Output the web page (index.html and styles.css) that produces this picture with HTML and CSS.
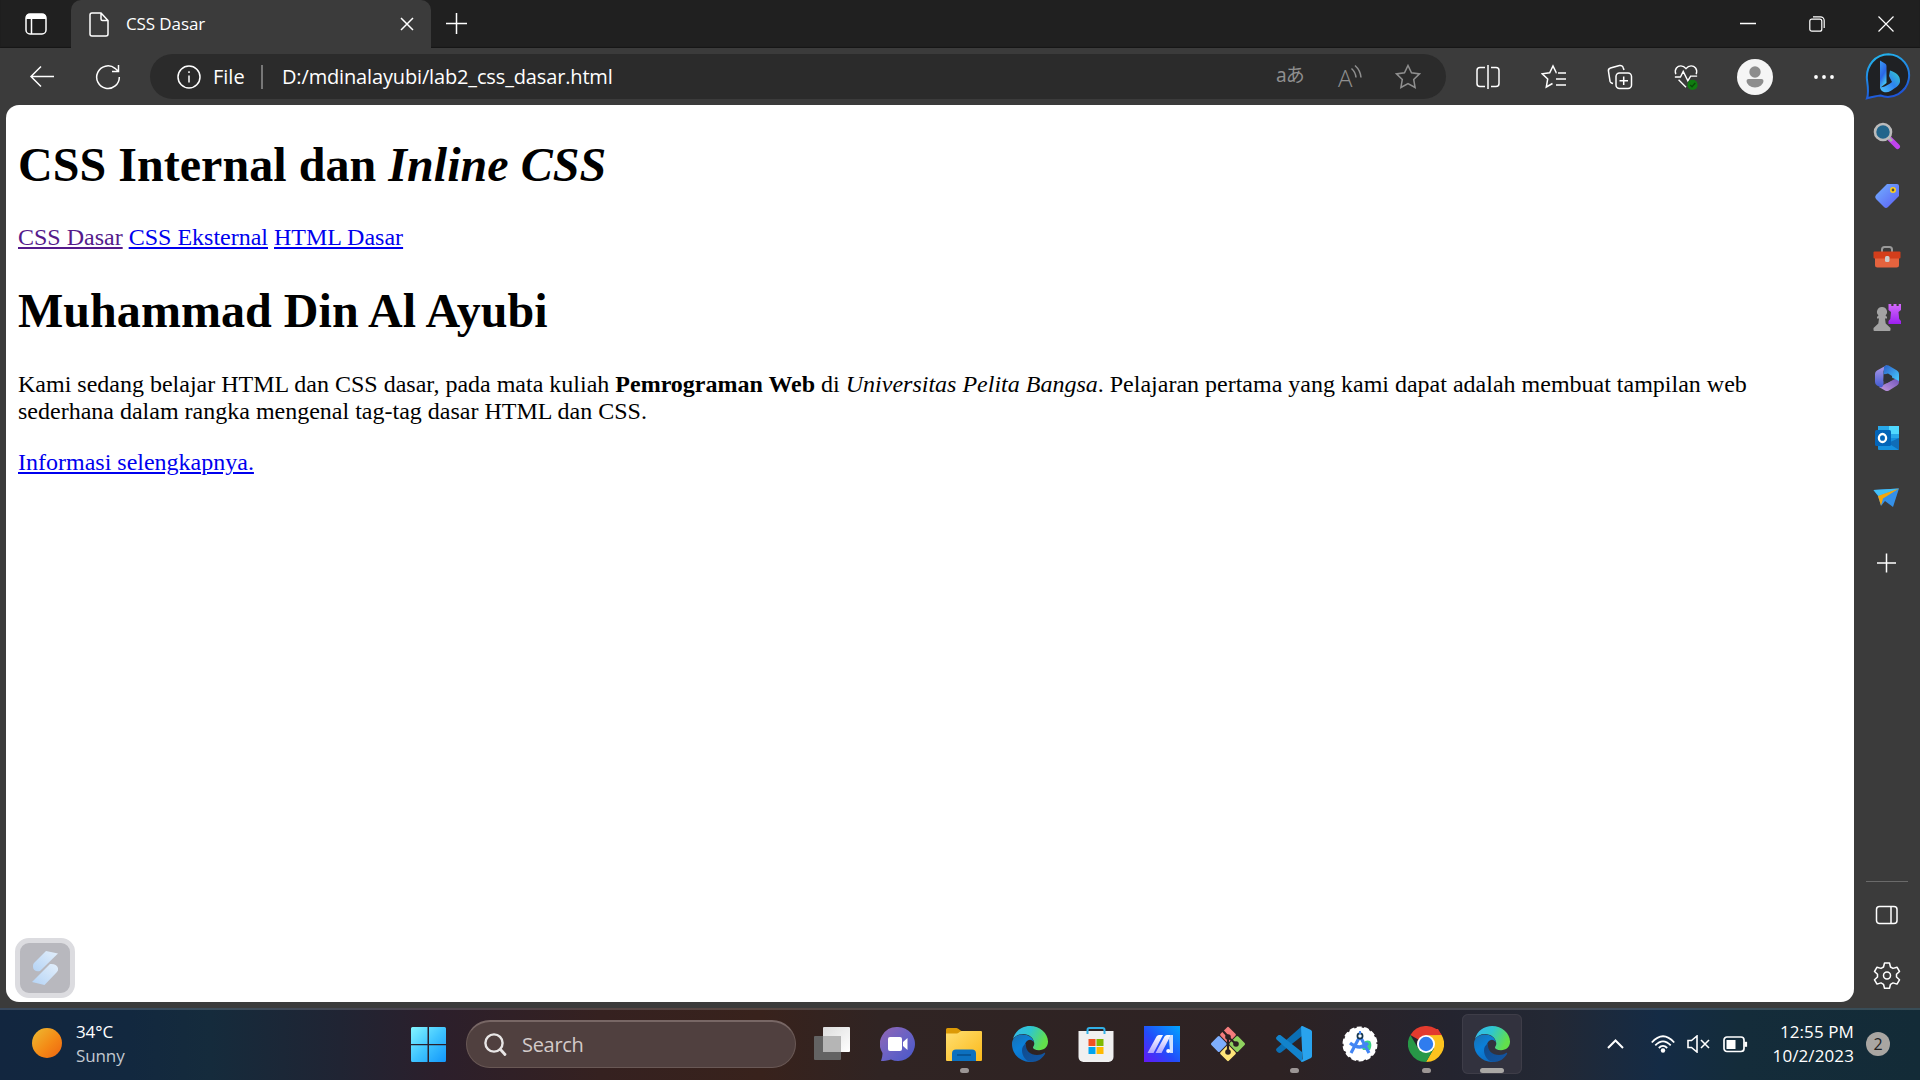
FILE: index.html
```html
<!DOCTYPE html>
<html lang="id">
<head>
<meta charset="utf-8">
<title>CSS Dasar</title>
<link rel="stylesheet" href="styles.css">
</head>
<body>
<svg class="defs" width="0" height="0" aria-hidden="true">
  <defs>
    <linearGradient id="eA" x1="0" y1="0" x2="1" y2="0.35"><stop offset="0" stop-color="#35b8f0"/><stop offset=".5" stop-color="#2fc6cf"/><stop offset="1" stop-color="#62e04b"/></linearGradient>
    <linearGradient id="eB" x1="0" y1="0" x2=".6" y2="1"><stop offset="0" stop-color="#1a6fae"/><stop offset=".5" stop-color="#0b80d8"/><stop offset="1" stop-color="#0c6cc4"/></linearGradient>
    <linearGradient id="eC" x1="0" y1="0" x2="1" y2="1"><stop offset="0" stop-color="#0f4a8c"/><stop offset="1" stop-color="#1357a4"/></linearGradient>
    <symbol id="edge" viewBox="0 0 36 36">
      <path fill="url(#eA)" d="M1 13C3 5 10 0 18 0c10 0 18 7.500 18 15.500 0 5.500-4 8.700-9 8.700-4 0-6-1.500-6-2.700 0-1 1.300-1.800 1.300-4C22 12 17 8 11 8 6.500 8 3 10 1 13z"/>
      <path fill="url(#eB)" d="M0 18C0 12 5 8.500 10.500 8.500c6 0 10.500 3 11.500 8-1-2-2.500-2.800-4-2.800-3.500 0-5.500 4-5.500 8C12.500 28 17 34 22 35.500 10 38 0 29 0 18z"/>
      <path fill="url(#eC)" d="M14 17.500c-1 7 4.500 11.500 11 11.500 3 0 5.500-1 7-2 .8-.4 1.500.2 1 1C30 33 25 36 20 36c-6 0-10-6-10-11.500 0-3 1.500-5.700 4-7z"/>
    </symbol>
  </defs>
</svg>

<div class="browser">
  <header class="tabstrip">
    <button class="tab-actions"><svg width="22" height="22" viewBox="0 0 22 22"><rect x="1" y="1" width="20" height="20" rx="4" class="line"/><path d="M1 6V4a3 3 0 0 1 3-3h14a3 3 0 0 1 3 3v2z" fill="#fff"/><path d="M6.500 6v15" class="line"/></svg></button>
    <div class="tab">
      <svg width="20" height="25" viewBox="0 0 20 25" class="line"><path d="M3 1h9l7 7.500V22a2 2 0 0 1-2 2H3a2 2 0 0 1-2-2V3a2 2 0 0 1 2-2zM12 1v6a1.500 1.500 0 0 0 1.500 1.500H19"/></svg>
      <span class="tab-title">CSS Dasar</span>
      <svg width="14" height="14" viewBox="0 0 14 14" class="line"><path d="M1 1l12 12M13 1L1 13"/></svg>
    </div>
    <svg class="new-tab line" width="22" height="22" viewBox="0 0 22 22"><path d="M10.500 0v21M0 10.500h21"/></svg>
    <div class="window-buttons">
      <svg width="16" height="16" viewBox="0 0 16 16" class="line"><path d="M0 7.500h16"/></svg>
      <svg width="16" height="16" viewBox="0 0 16 16" class="line thin"><rect x=".8" y="3.200" width="12" height="12" rx="2"/><path d="M4 .8h7.500a3.700 3.700 0 0 1 3.700 3.700V12"/></svg>
      <svg width="16" height="16" viewBox="0 0 16 16" class="line thin"><path d="M.5.5l15 15M15.500.5l-15 15"/></svg>
    </div>
  </header>

  <nav class="toolbar">
    <svg class="back line" width="26" height="24" viewBox="0 0 26 24"><path d="M25 11.500H2M12 1.500l-10 10 10 10"/></svg>
    <svg class="reload line" width="26" height="26" viewBox="0 0 26 26"><path d="M24.300 13A11.300 11.300 0 1 1 20 4.300L23 7M23.500 1v6.500H17"/></svg>
    <div class="address">
      <svg width="24" height="24" viewBox="0 0 24 24" class="line"><circle cx="12" cy="12" r="11"/><path d="M12 10.500v7M12 6.200v1.800"/></svg>
      <span class="scheme">File</span>
      <i class="bar"></i>
      <span class="url">D:/mdinalayubi/lab2_css_dasar.html</span>
      <div class="address-actions">
        <span class="translate">aあ</span>
        <svg class="read" width="24" height="24" viewBox="0 0 24 24"><text x="0" y="21.500" class="read-a">A</text><path class="line dim" d="M13.500 3.500q4 3.500 4.500 9M17 .5q5.500 5 6 12"/></svg>
        <svg width="26" height="26" viewBox="0 0 26 26" class="line dim"><path d="M13 1.500l3.500 7.300 8 1.100-5.800 5.600 1.400 8L13 19.700l-7.100 3.800 1.400-8L1.500 9.900l8-1.100z"/></svg>
      </div>
    </div>
    <div class="tools">
      <svg viewBox="0 0 26 26" class="line"><path d="M10 22.500H5a3 3 0 0 1-3-3v-13a3 3 0 0 1 3-3h5M16 3.500h5a3 3 0 0 1 3 3v13a3 3 0 0 1-3 3h-5M13 1v24"/></svg>
      <svg viewBox="0 0 26 26" class="line"><path d="M15.500 8.800h-.2L12 2 8.700 8.800l-7.500 1L6.700 15l-1.400 8 6.200-3.500M17 9h8M15 15h10M15 21h10"/></svg>
      <svg viewBox="0 0 26 26" class="line"><rect x="9" y="9" width="15.500" height="15.500" rx="3.500"/><path d="M16.700 12.500v8.500M12.500 16.700H21M6 19.500l-1-.3a3 3 0 0 1-2-2L1.500 7.500a3 3 0 0 1 2-3.500l9-2.500a3 3 0 0 1 3.700 2.200L17 6"/></svg>
      <svg viewBox="0 0 26 28" class="line"><path d="M2 11C0 5 4 2 7.500 2c2.500 0 4 1 5.500 3 1.500-2 3-3 5.500-3C22 2 26 5 24 11M1 14h6l3-6 5 10 3-5h7M5 17l8 8"/><circle cx="20" cy="22.500" r="5.500" fill="#107c10" stroke="none"/><path d="M17.500 22.500l2 2 3.500-4" stroke="#0a4a0a"/></svg>
    </div>
    <svg class="avatar" width="36" height="36" viewBox="0 0 36 36"><circle cx="18" cy="18" r="18" fill="#f5f5f5"/><circle cx="18" cy="13" r="5.700" fill="#8d8d8d"/><path d="M9.500 22a2 2 0 0 1 2-2h13a2 2 0 0 1 2 2 8.500 6.500 0 0 1-17 0z" fill="#8d8d8d"/></svg>
    <svg class="more" width="22" height="6" viewBox="0 0 22 6" fill="#fff"><circle cx="3" cy="3" r="1.900"/><circle cx="11" cy="3" r="1.900"/><circle cx="19" cy="3" r="1.900"/></svg>
    <svg class="bing" width="46" height="47" viewBox="0 0 46 47">
      <defs><linearGradient id="bo" x1="0" y1="0" x2="0.300" y2="1"><stop offset="0" stop-color="#23bdf0"/><stop offset="1" stop-color="#1e55d8"/></linearGradient><linearGradient id="bi" x1="0" y1="0" x2=".4" y2="1"><stop offset="0" stop-color="#3b9bf5"/><stop offset=".6" stop-color="#2a66e6"/><stop offset="1" stop-color="#48c7f4"/></linearGradient><linearGradient id="bj" x1="1" y1="0" x2="0" y2="1"><stop offset="0" stop-color="#37d0c8"/><stop offset=".5" stop-color="#2d83f0"/><stop offset="1" stop-color="#52c8fa"/></linearGradient></defs>
      <path d="M23.500 1.200a21.300 21.300 0 1 1-8 41.300C11 43 7 44 2 45.300 4 40 2.800 33 2 27 .5 12 11 1.200 23.500 1.200z" fill="#1f2124" stroke="url(#bo)" stroke-width="2"/>
      <path d="M15 7.500l5 3a3 3 0 0 1 1.500 2.500v17L15 35z" fill="url(#bi)"/><path d="M25 17.500c6 2 10.500 5 10 11-.3 4-5 6.500-9.500 9.500-4 2.500-10 1.500-10.500-4 3 1 8-2 12-5l-3-6z" fill="url(#bj)"/>
    </svg>
  </nav>

  <div class="workspace">
    <main class="page">
      <h1>CSS Internal dan <i>Inline CSS</i></h1>
      <nav><a class="visited" href="#dasar">CSS Dasar</a> <a href="#eksternal">CSS Eksternal</a> <a href="#html">HTML Dasar</a></nav>
      <h1 class="name">Muhammad Din Al Ayubi</h1>
      <p>Kami sedang belajar HTML dan CSS dasar, pada mata kuliah <b>Pemrograman Web</b> di <i>Universitas Pelita Bangsa</i>. Pelajaran pertama yang kami dapat adalah membuat tampilan web sederhana dalam rangka mengenal tag-tag dasar HTML dan CSS.</p>
      <a href="#info">Informasi selengkapnya.</a>
      <div class="widget"><svg width="26" height="35" viewBox="0 0 26 35"><defs><linearGradient id="wg" x1="1" y1="0" x2="0" y2="1"><stop offset="0" stop-color="#e3effb"/><stop offset="1" stop-color="#b4d3f5"/></linearGradient></defs><path fill="url(#wg)" d="M14 0l12 2.500L8 20c-4 1-7-1-7-4 0-2 0-3 1.500-4.500z"/><path fill="url(#wg)" d="M18 13c4-.5 7 1 8 4 .4 2 0 3-1.500 4.500L12.500 34 0 31z"/></svg></div>
    </main>

    <aside class="sidebar">
      <svg viewBox="0 0 28 28"><path d="M17 17l7.500 7.500" stroke="#c044ee" stroke-width="5" stroke-linecap="round"/><path d="M15 15l4 4" stroke="#aaa" stroke-width="3"/><circle cx="10" cy="10" r="8" fill="#22658b" stroke="#bbb" stroke-width="2.600"/></svg>
      <svg viewBox="0 0 28 28"><defs><linearGradient id="tg" x1="0" y1="0" x2="1" y2="1"><stop stop-color="#72b2ff"/><stop offset="1" stop-color="#5b5df4"/></linearGradient></defs><path d="M14 2h10a2 2 0 0 1 2 2v10L15 25a3 3 0 0 1-4 0l-8-8a3 3 0 0 1 0-4z" fill="url(#tg)"/><circle cx="20" cy="8" r="2.200" fill="#554c36" stroke="#ffd01c" stroke-width="1.600"/></svg>
      <svg viewBox="0 0 28 28"><path d="M9 9V6.500A2.500 2.500 0 0 1 11.500 4h5A2.500 2.500 0 0 1 19 6.500V9" fill="none" stroke="#999" stroke-width="2"/><path d="M2 14h24v8a2.500 2.500 0 0 1-2.500 2.500h-19A2.500 2.500 0 0 1 2 22z" fill="#e5633e"/><rect x=".5" y="8.500" width="27" height="7" rx="1" fill="#d43e1b"/><rect x="12" y="13" width="4.500" height="6" rx="1.500" fill="#ccc"/></svg>
      <svg viewBox="0 0 28 28"><defs><linearGradient id="rk" x1="0" y1="0" x2="0" y2="1"><stop stop-color="#d36afb"/><stop offset="1" stop-color="#9c1ff0"/></linearGradient></defs><path d="M15.500 1h2.800v2h2.200V1h3v2h2.200V1H28v6l-2.500 2 .7 7 1.800 2v3H15.500v-3l1.800-2 .7-7-2.500-2z" fill="url(#rk)"/><path d="M9 4a4.800 4.800 0 0 1 3.500 8.300L14 14v1.500h-2l.7 5 4.800 4.500v2a1 1 0 0 1-1 1h-15a1 1 0 0 1-1-1v-2l4.800-4.500.7-5H4V14l1.500-1.700A4.800 4.800 0 0 1 9 4z" fill="#a3a3a3"/></svg>
      <svg viewBox="0 0 28 28"><defs><linearGradient id="m3" x1="0" y1="0" x2="1" y2="1"><stop stop-color="#2a5fc8"/><stop offset="1" stop-color="#48ccff"/></linearGradient><linearGradient id="m4" x1="0" y1="0" x2="0" y2="1"><stop stop-color="#b49be8"/><stop offset="1" stop-color="#3f5ad0"/></linearGradient><linearGradient id="m5" x1="1" y1="0" x2="0" y2="1"><stop stop-color="#6a4fb8"/><stop offset="1" stop-color="#c79ce0"/></linearGradient></defs><path d="M26 13v5a4 4 0 0 1-2 3.500l-8 5a4 4 0 0 1-4 0L6 23l12-6z" fill="url(#m5)"/><path d="M14 1L4 6.500A4 4 0 0 0 2 10v8a4 4 0 0 0 2 3.500l4 2c2-1 2.500-2 2.500-4V7z" fill="url(#m4)"/><path d="M11 2.500c2-1.500 3.500-1.500 5-.8l8 4.800A4 4 0 0 1 26 10v7l-8-4-7.500-3z" fill="url(#m3)"/><path d="M11 10.500l4-1 4 2.500v4l-5 3-3.500-2z" fill="#303238"/></svg>
      <svg viewBox="0 0 28 28"><rect x="5" y="2" width="21" height="18" fill="#28a8ea"/><path d="M16 2h10v8H16z" fill="#50d9ff"/><path d="M5 14h21v11a1 1 0 0 1-1 1H6a1 1 0 0 1-1-1z" fill="#1490df"/><path d="M26 14v12L15 19z" fill="#0f6db8"/><rect x="2" y="6" width="16" height="16" rx="1.500" fill="#0364b8"/><ellipse cx="9.500" cy="14" rx="3.600" ry="4" fill="none" stroke="#fff" stroke-width="2.300"/></svg>
      <svg viewBox="0 0 28 28"><path d="M.5 6L26 4.500 20 23l-8-6-4 5-3-10z" fill="#3490e8"/><path d="M.5 6L26 4.500 5.500 12z" fill="#43c0f5"/><path d="M26 4.500L5 12l3 9.500 2-7z" fill="#f5a70c"/></svg>
      <svg viewBox="0 0 28 28" class="line add"><path d="M13.500 4.500v19M4 14h19"/></svg>
      <div class="sidebar-bottom">
        <svg viewBox="0 0 28 28" class="line"><rect x="3.500" y="5.500" width="20.500" height="17" rx="3"/><path d="M18 5.500v17"/></svg>
        <svg viewBox="0 0 28 28" class="line"><path d="M11.500 2h5l1 4 2.500 1.400 4-1.200 2.500 4.300-3 2.800v2.700l3 2.800-2.500 4.300-4-1.200-2.500 1.400-1 4h-5l-1-4L8 21.900l-4 1.200-2.500-4.300 3-2.800v-2.700l-3-2.800L4 6.200l4 1.200L10.500 6z" stroke-linejoin="round"/><circle cx="14" cy="14.600" r="3.500"/></svg>
      </div>
    </aside>
  </div>
</div>

<footer class="taskbar">
  <div class="weather"><i class="sun"></i><div><span>34°C</span><span class="soft">Sunny</span></div></div>
  <svg class="start" width="36" height="36" viewBox="0 0 36 36"><defs><linearGradient id="wn" x1="0" y1="0" x2="36" y2="36" gradientUnits="userSpaceOnUse"><stop stop-color="#84f6ff"/><stop offset=".5" stop-color="#3fc4ff"/><stop offset="1" stop-color="#0f94fb"/></linearGradient></defs><path fill="url(#wn)" d="M1.500 0h15v17H0V1.500A1.500 1.500 0 0 1 1.500 0zM18 0h15.500A1.500 1.500 0 0 1 35 1.500V17H18zM0 18.300h16.500V35h-15A1.500 1.500 0 0 1 0 33.500zM18 18.300h17v15.200a1.500 1.500 0 0 1-1.500 1.500H18z"/></svg>
  <div class="search"><svg width="23" height="24" viewBox="0 0 23 24" fill="none" stroke="#e8e6e6" stroke-linecap="round"><circle cx="10" cy="10" r="8.600" stroke-width="2.400"/><path d="M16.500 16.500l4.500 5" stroke-width="2.800"/></svg><span>Search</span></div>
  <div class="apps">
    <div class="app"><svg viewBox="0 0 36 36"><defs><linearGradient id="tv" x1="0" y1="0" x2="1" y2="1"><stop stop-color="#ddd"/><stop offset="1" stop-color="#fff"/></linearGradient></defs><rect x="9" y="1" width="27" height="25" rx="1" fill="url(#tv)"/><rect x="0" y="10" width="27" height="24" rx="1" fill="#636363"/><path d="M9 10h18v16H9z" fill="#b5b5b5"/></svg></div>
    <div class="app"><svg viewBox="0 0 36 36"><defs><linearGradient id="tm" x1="0" y1="0" x2="1" y2="1"><stop stop-color="#9266b4"/><stop offset=".5" stop-color="#6b62c4"/><stop offset="1" stop-color="#4757c9"/></linearGradient></defs><path d="M18 1a17 17 0 1 1-7 32.500C7 35 4 35 1 35c1-3 1.500-6 1.500-8A17 17 0 0 1 18 1z" fill="url(#tm)"/><rect x="8" y="11" width="14" height="14" rx="2" fill="#fff"/><path d="M23 16l4.500-4v12L23 20z" fill="#fff"/></svg></div>
    <div class="app running"><svg viewBox="0 0 36 36"><defs><linearGradient id="fd" x1="0" y1="0" x2="1" y2="1"><stop stop-color="#ffdf71"/><stop offset="1" stop-color="#fbb91a"/></linearGradient></defs><path d="M0 10V3.500A1.500 1.500 0 0 1 1.500 2h9c2 0 3 2.500 5 3v5z" fill="#dc9a06"/><path d="M0 7.500h11c2 0 2.500-2.500 4.500-2.500H35a1 1 0 0 1 1 1v28a1 1 0 0 1-1 1H1a1 1 0 0 1-1-1z" fill="url(#fd)"/><path d="M6 35v-7.500a4 4 0 0 1 4-4h16a4 4 0 0 1 4 4V35z" fill="#0c70bf"/><path d="M11 29h14" stroke="#07508f" stroke-width="1.600"/></svg></div>
    <div class="app"><svg viewBox="0 0 36 36"><use href="#edge"/></svg></div>
    <div class="app"><svg viewBox="0 0 36 36"><path d="M.5 5h35v26a5 5 0 0 1-5 5h-25a5 5 0 0 1-5-5z" fill="#f0f0f0"/><path d="M9.500 8V4a2 2 0 0 1 2-2h13a2 2 0 0 1 2 2v4" fill="none" stroke="#31b0e6" stroke-width="2"/><path d="M10.500 13h7v7h-7z" fill="#f25022"/><path d="M18.500 13h7v7h-7z" fill="#7fba00"/><path d="M10.500 21h7v7h-7z" fill="#00a4ef"/><path d="M18.500 21h7v7h-7z" fill="#ffb900"/></svg></div>
    <div class="app"><svg viewBox="0 0 36 36"><defs><linearGradient id="as" x1="0" y1="1" x2="1" y2="0"><stop stop-color="#6418f5"/><stop offset=".45" stop-color="#234cfa"/><stop offset="1" stop-color="#00a6ff"/></linearGradient><linearGradient id="at" x1="0" y1="0" x2="0" y2="1"><stop stop-color="#fff"/><stop offset="1" stop-color="#b0a8ff"/></linearGradient></defs><path d="M0 0h36v36H0z" fill="url(#as)"/><path d="M3.500 27l9-16.500a3 3 0 0 1 2.500-1.500h4L9.500 27zM11.500 27l9-16.500A3 3 0 0 1 23 9h4l-9.500 18z" fill="url(#at)"/><path d="M25 12l2-3h2v18h-3z" fill="#cfe0ff"/><circle cx="24.300" cy="25" r="2.100" fill="#fff"/></svg></div>
    <div class="app"><svg viewBox="0 0 36 36"><g transform="rotate(45 18 18)"><rect x="5.500" y="5.500" width="12" height="12" rx="1.500" fill="#f57d7d"/><rect x="18.500" y="5.500" width="12" height="12" rx="1.500" fill="#8fd25f"/><rect x="5.500" y="18.500" width="12" height="12" rx="1.500" fill="#7eaefc"/><rect x="18.500" y="18.500" width="12" height="12" rx="1.500" fill="#ffe579"/></g><path d="M12 4l6 6.500V26M18 11l8 7" stroke="#2c2122" stroke-width="2.200" fill="none"/><circle cx="18" cy="11" r="2.800" fill="#2c2122"/><circle cx="26" cy="18" r="2.800" fill="#2c2122"/><circle cx="18" cy="26" r="2.800" fill="#2c2122"/></svg></div>
    <div class="app running"><svg viewBox="0 0 36 36"><path d="M26 0v10L5 26.500c-1 .7-2 .5-3 0L.5 25c-.7-.8-.5-2 .3-2.700z" fill="#0b6fb4"/><path d="M26 36V26L5 9.500c-1-.7-2-.5-3 0L.5 11c-.7.800-.5 2 .3 2.700z" fill="#1283cc"/><path d="M25 .7c.5-.7 1.200-.8 2-.5l7.500 3.500c1 .5 1.500 1.300 1.500 2.300v24c0 1-.5 1.800-1.500 2.300L27 35.800c-.8.300-1.500.2-2-.5l1.500-2z" fill="#29a3ee"/></svg></div>
    <div class="app"><svg viewBox="0 0 36 36"><circle cx="18" cy="18" r="16.500" fill="#fff" stroke="#fff" stroke-width="2" stroke-dasharray="5 2.400"/><path d="M21 24a6 6 0 0 1 7-9c1.500 2 2 5 0 9z" fill="#3bd585"/><path d="M17 12L9 27M19 12l8 15M8 17q10 8 18 0" stroke="#4285f4" stroke-width="3.200" fill="none"/><circle cx="18" cy="10" r="2.600" fill="#fff" stroke="#15364d" stroke-width="1.700"/><path d="M18 5v3" stroke="#4285f4" stroke-width="2"/></svg></div>
    <div class="app running"><svg viewBox="0 0 36 36"><path d="M18 18L2.400 9a18 18 0 0 1 31.200 0z" fill="#e33b2e"/><path d="M18 18h0L33.600 9A18 18 0 0 1 18 36l7.800-13.500z" fill="#fcc31e"/><path d="M18 18l7.800 4.500L18 36A18 18 0 0 1 2.400 9l7.800 13.500z" fill="#279847"/><path d="M18 9h15.600L25.800 18z" fill="#fcc31e"/><path d="M18 9.200V3h12l3.600 6z" fill="#e33b2e"/><circle cx="18" cy="18" r="9" fill="#fff"/><circle cx="18" cy="18" r="7.200" fill="#2f7cee"/></svg></div>
    <div class="app running active"><svg viewBox="0 0 36 36"><use href="#edge"/></svg></div>
  </div>
  <div class="tray">
    <svg class="chevron" width="17" height="10" viewBox="0 0 17 10" fill="none" stroke="#fff" stroke-width="2"><path d="M1 9l7.500-7.500L16 9"/></svg>
    <svg class="wifi" width="24" height="18" viewBox="0 0 24 18" fill="none" stroke="#fff" stroke-width="1.800"><path d="M.8 7.500Q12-5 23.200 7.500M4.300 10.300q7.700-8 15.400 0M7.800 13q4.200-4.300 8.400 0"/><circle cx="12" cy="15.500" r="2.200" fill="#fff" stroke="none"/></svg>
    <svg class="speaker" width="24" height="18" viewBox="0 0 24 18" fill="none" stroke="#fff" stroke-width="1.600"><path d="M1 5.500h3.500L10 1v16l-5.500-4.500H1zM14 5l8 8M22 5l-8 8"/></svg>
    <svg class="battery" width="25" height="17" viewBox="0 0 25 17" fill="none" stroke="#fff" stroke-width="1.700"><rect x="1" y="1" width="20" height="14.500" rx="3"/><path d="M3.500 4h9v9h-9z" fill="#fff" stroke="none"/><path d="M22.800 5.800v5" stroke-width="2.600"/></svg>
    <div class="clock"><span>12:55 PM</span><span>10/2/2023</span></div>
    <span class="badge">2</span>
  </div>
</footer>
</body>
</html>
```
FILE: styles.css
```css
* { box-sizing: border-box; }
body {
  margin: 0;
  width: 1920px;
  height: 1080px;
  overflow: hidden;
  display: flex;
  flex-direction: column;
  background: #3b3b3b;
  color: #fff;
  font-family: "Open Sans", "Noto Sans", "Noto Sans CJK JP", sans-serif;
}
svg { display: block; flex: none; }
.defs { position: absolute; }
.line { fill: none; stroke: #fff; stroke-width: 1.5; }
.thin { stroke-width: 1.2; }
.dim { stroke: #8f8f8f; }

.browser { height: 1008px; display: flex; flex-direction: column; }

.tabstrip { height: 48px; display: flex; background: #202020; box-shadow: inset 0 -1px 1px #161616; }
.tab-actions { width: 71px; padding: 0 0 0 25px; border: 0; background: none; display: flex; align-items: center; }
.tab {
  width: 360px;
  padding: 0 17px 0 18px;
  display: flex;
  align-items: center;
  background: #3b3b3b;
  border-radius: 10px 10px 0 0;
}
.tab-title { flex: 1; margin: 0 0 2px 17px; font-size: 17px; letter-spacing: -0.1px; }
.new-tab { margin: 13px 0 0 15px; }
.window-buttons { margin: 16px 26px 0 auto; display: flex; gap: 53px; }

.toolbar { height: 57px; display: flex; align-items: center; padding: 0 9px 0 29px; }
.reload { margin-left: 40px; }
.address {
  width: 1296px;
  height: 45px;
  margin-left: 29px;
  padding: 0 25px 0 27px;
  border-radius: 23px;
  background: #2b2b2b;
  display: flex;
  align-items: center;
  font-size: 20px;
}
.scheme { width: 36px; margin-left: 12px; }
.bar { width: 2px; height: 24px; margin-left: 12px; background: #777; }
.url { margin-left: 19px; letter-spacing: -0.15px; }
.address-actions { margin-left: auto; display: flex; align-items: center; color: #8f8f8f; }
.translate { width: 28px; margin: 0 34px 3px 0; font: 400 19px/28px "Noto Sans", "Noto Sans CJK JP", sans-serif; white-space: nowrap; letter-spacing: -1px; }
.read { overflow: visible; margin-right: 33px; }
.read-a { font: 300 24px "Open Sans", sans-serif; fill: #8f8f8f; }
.tools { display: flex; gap: 40px; margin-left: 28.5px; }
.tools svg { width: 26px; height: 26px; }
.avatar { margin-left: 38px; }
.more { margin-left: 40px; }
.bing { margin-left: auto; }

.workspace { flex: 1; display: flex; padding-left: 6px; }
.page {
  position: relative;
  width: 1848px;
  height: 897px;
  padding: 32px 12px 0;
  background: #fff;
  border-radius: 13px;
  color: #000;
  font: 24px "Liberation Serif", "Times New Roman", serif;
}
.page h1 { margin: 0 0 32px; font-size: 48px; line-height: 55px; letter-spacing: 0.05px; }
.page nav { margin-bottom: 32px; line-height: 27px; }
.page h1.name { margin-bottom: 33px; }
.page p { margin: 0 0 24px; line-height: 27px; }
.page a { color: #0000ee; text-decoration: underline; }
.page a.visited { color: #551a8b; }
.widget {
  position: absolute;
  left: 9px;
  bottom: 4px;
  width: 60px;
  height: 60px;
  border: 5px solid #dcdce0;
  border-radius: 14px;
  background: #b8b8be;
  display: flex;
  align-items: center;
  justify-content: center;
}

.sidebar { flex: 1; display: flex; flex-direction: column; align-items: center; padding: 17px 0 0; gap: 32.4px; }
.sidebar svg { width: 28px; height: 28px; }
.sidebar .add { margin-top: 4px; }
.sidebar-bottom {
  width: 42px;
  margin: auto 0 19px;
  padding-top: 19px;
  border-top: 1px solid #6a6a6a;
  display: flex;
  flex-direction: column;
  align-items: center;
  gap: 32px;
}

.taskbar {
  height: 72px;
  border-top: 2px solid rgba(255, 255, 255, 0.16);
  display: flex;
  background: linear-gradient(90deg, #12263f 0, #12283f 130px, #152b3c 210px, #202433 340px, #2c1f2b 440px, #352120 600px, #38221c 760px, #302423 880px, #2d2223 1280px, #24242f 1450px, #232834 1550px, #142b45 1660px, #142c3a 1740px, #132b37 1920px);
  background-origin: border-box;
  font-size: 17px;
  line-height: 24px;
}
.weather { width: 411px; padding: 10px 0 0 32px; display: flex; gap: 14px; letter-spacing: -0.1px; }
.weather span { display: block; }
.sun { width: 30px; height: 30px; margin-top: 8px; border-radius: 50%; background: linear-gradient(135deg, #edbc32, #f48a16 55%, #ee6410); }
.soft { color: #c3c9d0; }
.start { margin-top: 17px; }
.search {
  width: 330px;
  height: 48px;
  margin: 10px 0 0 19px;
  padding-left: 17px;
  border: 1px solid #695855;
  border-top: 2px solid #786765;
  border-radius: 24px;
  background: #50403f;
  display: flex;
  align-items: center;
  color: #d3cbca;
  font-size: 20px;
}
.search span { margin-left: 15px; letter-spacing: -0.3px; }
.apps { display: flex; gap: 6px; margin: 4px 0 0 6px; }
.app {
  width: 60px;
  height: 60px;
  padding-top: 12px;
  display: flex;
  flex-direction: column;
  align-items: center;
  border-radius: 6px;
}
.app svg { width: 36px; height: 36px; }
.running::after { content: ""; width: 9px; height: 5px; margin-top: 6px; border-radius: 3px; background: #9c9695; }
.active { background: #32323e; box-shadow: inset 0 0 0 1px #3e3d48; }
.active::after { width: 24px; background: #aaa8a5; }
.tray { flex: 1; display: flex; align-items: center; padding: 0 30px 2px 0; }
.chevron { margin-left: 85px; }
.wifi { margin-left: 27px; }
.speaker { margin-left: 12px; }
.battery { margin-left: 12px; }
.clock { margin-left: auto; text-align: right; letter-spacing: 0.1px; }
.clock span { display: block; }
.badge { width: 24px; height: 24px; margin: 0 0 0 12px; border-radius: 50%; background: #a9a6a2; color: #222; font-size: 16px; text-align: center; }
```
